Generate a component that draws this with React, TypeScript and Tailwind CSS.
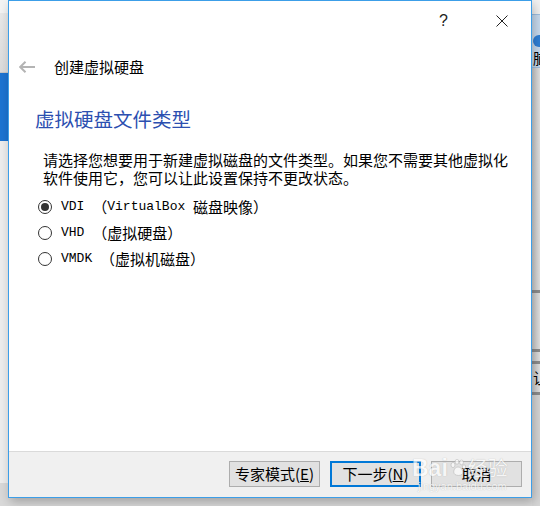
import React, { useState } from 'react';

const cjk = "font-['Noto_Sans_CJK_SC','Microsoft_YaHei',sans-serif]";
const mono = "font-['Liberation_Mono','Noto_Sans_CJK_SC',monospace]";

const OPTIONS = [
  { id: 'vdi', code: 'VDI', label: 'VirtualBox 磁盘映像' },
  { id: 'vhd', code: 'VHD', label: '虚拟硬盘' },
  { id: 'vmdk', code: 'VMDK', label: '虚拟机磁盘' },
];

function Radio({ checked }: { checked: boolean }) {
  return (
    <span className="w-[14px] h-[14px] rounded-full border border-[#333] bg-white flex items-center justify-center shrink-0">
      {checked && <span className="w-[8px] h-[8px] rounded-full bg-[#333]" />}
    </span>
  );
}

function Button({ children, focused }: { children: React.ReactNode; focused?: boolean }) {
  return (
    <button
      className={`w-[91px] h-[26px] flex items-center justify-center bg-[#e1e1e1] text-[15px] text-black ${cjk} ${
        focused ? 'border-2 border-[#0078d7]' : 'border border-[#adadad]'
      }`}
    >
      {children}
    </button>
  );
}

export default function App() {
  const [selected, setSelected] = useState('vdi');

  return (
    <div className="relative w-[540px] h-[506px] overflow-hidden bg-[#d9d9d9]">
      {/* desktop behind the dialog (left) */}
      <div className="absolute left-0 top-0 w-[8px] h-[483px] flex flex-col">
        <div className="h-[13px] bg-[#f4f4f4]" />
        <div className="h-[60px] bg-gradient-to-b from-[#e9e9e9] to-[#dcdcdc] border-b border-[#c8c8c8]" />
        <div className="h-[68px] bg-[#1c74d2]" />
        <div className="flex-1 bg-[#eeeeee]" />
      </div>

      {/* desktop behind the dialog (right) */}
      <div className="absolute left-[532px] top-0 w-[8px] h-[506px] flex flex-col overflow-hidden bg-gradient-to-r from-[#c9c9c9] to-[#e2e2e2]">
        <div className="h-[14px] bg-[#f2f2f2]" />
        <div className="h-[54px] bg-[#c7daee] border-y border-[#9fbfe0] relative">
          <div className="absolute left-[1px] top-[20px] w-[8px] h-[12px] rounded-l-full bg-[#2f7fd6]" />
          <span className={`absolute left-[1px] top-[34px] text-[15px] leading-[17px] text-black ${cjk}`}>脑</span>
        </div>
        <div className="h-[222px]" />
        <div className="h-[3px] bg-[#8d8d8d]" />
        <div className="h-[56px]" />
        <div className="h-[3px] bg-[#8d8d8d]" />
        <div className="h-[9px]" />
        <div className="h-[3px] bg-[#8d8d8d]" />
        <div className="h-[28px] relative">
          <span className={`absolute left-[1px] top-[5px] text-[15px] leading-[17px] text-black ${cjk}`}>让</span>
        </div>
        <div className="h-[3px] bg-[#8d8d8d]" />
        <div className="flex-1 bg-[#d6d6d6]" />
      </div>

      {/* dialog window */}
      <div className="absolute left-[8px] top-0 w-[524px] h-[498px] border border-[#3c9ee8] bg-white flex flex-col shadow-[2px_4px_10px_rgba(0,0,0,0.25)]">
        {/* title bar */}
        <div className="h-[40px] flex items-center justify-end pr-[23px] gap-[48px]">
          <span className="text-[16px] text-[#222] font-['Liberation_Sans',sans-serif]">?</span>
          <svg width="12" height="12" viewBox="0 0 12 12" className="text-[#222]">
            <path d="M0.5 0.5 L11.5 11.5 M11.5 0.5 L0.5 11.5" stroke="currentColor" strokeWidth="1" />
          </svg>
        </div>

        {/* wizard header */}
        <div className="mt-[14px] h-[24px] flex items-center pl-[10px]">
          <svg width="17" height="12" viewBox="0 0 17 12" className="text-[#b4b4b4]">
            <path d="M1 6 H16 M6.5 0.8 L1.2 6 L6.5 11.2" stroke="currentColor" strokeWidth="2" fill="none" />
          </svg>
          <span className={`ml-[18px] text-[15px] text-black ${cjk}`}>创建虚拟硬盘</span>
        </div>

        {/* page title */}
        <h1 className={`mt-[26px] pl-[26px] text-[19.5px] leading-[28px] text-[#2c4fb0] ${cjk}`}>
          虚拟硬盘文件类型
        </h1>

        {/* description */}
        <p className={`mt-[18px] pl-[34px] text-[15px] leading-[18px] text-black whitespace-nowrap ${cjk}`}>
          请选择您想要用于新建虚拟磁盘的文件类型。如果您不需要其他虚拟化
          <br />
          软件使用它，您可以让此设置保持不更改状态。
        </p>

        {/* file type radios */}
        <div className="mt-[7px] pl-[29px] flex flex-col">
          {OPTIONS.map((opt) => (
            <label
              key={opt.id}
              onClick={() => setSelected(opt.id)}
              className="h-[26px] flex items-center gap-[9px] cursor-pointer"
            >
              <Radio checked={selected === opt.id} />
              <span className="flex items-center whitespace-nowrap text-black">
                <span className={`${mono} text-[13px]`}>{opt.code}&nbsp;</span>
                <span className={`${cjk} text-[15px]`}>（</span>
                {opt.id === 'vdi' ? (
                  <>
                    <span className={`${mono} text-[13px]`}>VirtualBox&nbsp;</span>
                    <span className={`${cjk} text-[15px]`}>磁盘映像）</span>
                  </>
                ) : (
                  <span className={`${cjk} text-[15px]`}>{opt.label}）</span>
                )}
              </span>
            </label>
          ))}
        </div>

        <div className="flex-1" />

        {/* footer buttons */}
        <div className="h-[46px] border-t border-[#dadada] bg-[#f0f0f0] flex items-start justify-end gap-[10px] pt-[9px] pr-[9px]">
          <Button>
            专家模式(<span className="underline">E</span>)
          </Button>
          <Button focused>
            下一步(<span className="underline">N</span>)
          </Button>
          <Button>取消</Button>
        </div>
      </div>

      {/* watermark */}
      <div className="absolute left-[412px] top-[452px] flex flex-col items-start pointer-events-none opacity-70">
        <div className="flex items-end gap-[2px] h-[28px]">
          <span className="text-[23px] leading-[24px] font-bold text-white font-['Liberation_Sans',sans-serif] [text-shadow:0_0_1px_#9a9a9a]">
            Bai
          </span>
          <svg width="16" height="18" viewBox="0 0 16 18" className="mb-[3px]">
            <g fill="white" stroke="#a8a8a8" strokeWidth="0.6">
              <ellipse cx="3" cy="6" rx="2" ry="2.6" />
              <ellipse cx="7" cy="2.8" rx="1.9" ry="2.4" />
              <ellipse cx="11.5" cy="3.4" rx="1.9" ry="2.4" />
              <ellipse cx="14" cy="8" rx="1.7" ry="2.2" />
              <path d="M8 8 C4 8 2.5 13.5 5 15.5 C7 16.8 10 16.8 12 15.5 C14 13.5 12 8 8 8 Z" />
            </g>
          </svg>
          <span className={`text-[20px] leading-[24px] text-white ${cjk} [text-shadow:0_0_1px_#9a9a9a]`}>经验</span>
        </div>
        <span className="text-[11px] leading-[12px] text-white font-['Liberation_Sans',sans-serif] [text-shadow:0_0_1px_#9a9a9a] ml-[6px]">
          jingyan.baidu.com
        </span>
      </div>
    </div>
  );
}
